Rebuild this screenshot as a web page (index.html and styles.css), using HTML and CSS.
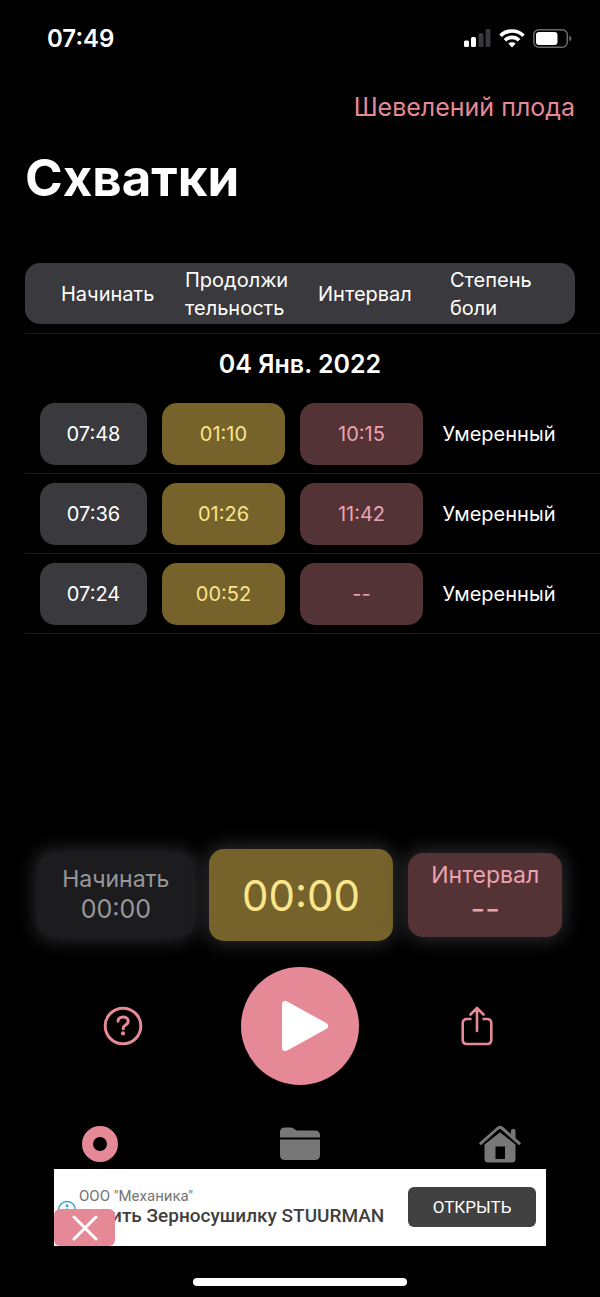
FILE: index.html
```html
<!DOCTYPE html>
<html lang="ru">
<head>
<meta charset="utf-8">
<meta name="viewport" content="width=device-width, initial-scale=1">
<title>Схватки</title>
<link rel="stylesheet" href="styles.css">
</head>
<body>
<div class="status">
  <span class="clock">07:49</span>
  <div class="status-icons">
    <svg width="27" height="18" viewBox="0 0 27 18"><rect x="0" y="11.500" width="5" height="6.500" rx="1.500" fill="#fff"/><rect x="7" y="8" width="5" height="10" rx="1.500" fill="#fff"/><rect x="14.500" y="4" width="5" height="14" rx="1.500" fill="#38383a"/><rect x="21.500" y="0" width="5" height="18" rx="1.500" fill="#38383a"/></svg>
    <svg width="26" height="20" viewBox="0 0 26 20"><g fill="none" stroke="#fff" stroke-width="3.600"><path d="M1.500 7.700a16.400 16.400 0 0 1 23 0"/><path d="M5.900 12.300a10.200 10.200 0 0 1 14.200 0"/></g><path d="M9.300 15.600a5.500 5.500 0 0 1 7.400 0L13 19.400z" fill="#fff"/></svg>
    <svg width="39" height="19" viewBox="0 0 39 19"><rect x="0.800" y="0.800" width="33.500" height="17.400" rx="5" fill="none" stroke="#6b6b6d" stroke-width="1.500"/><rect x="3" y="3" width="21.500" height="13" rx="3" fill="#fff"/><path d="M36.300 6.500v6q2.200-.8 2.200-3t-2.200-3z" fill="#6b6b6d"/></svg>
  </div>
</div>
<header class="header">
  <a class="link" href="#movements">Шевелений плода</a>
  <h1 class="title">Схватки</h1>
</header>
<main class="main">
  <table class="log">
    <thead>
      <tr class="head-row"><th>Начинать</th><th>Продолжи<br>тельность</th><th>Интервал</th><th>Степень<br>боли</th></tr>
    </thead>
    <tbody>
      <tr class="date-row"><th colspan="4">04 Янв. 2022</th></tr>
      <tr class="row"><td class="pill">07:48</td><td class="pill gold">01:10</td><td class="pill rose">10:15</td><td>Умеренный</td></tr>
      <tr class="row"><td class="pill">07:36</td><td class="pill gold">01:26</td><td class="pill rose">11:42</td><td>Умеренный</td></tr>
      <tr class="row"><td class="pill">07:24</td><td class="pill gold">00:52</td><td class="pill rose">--</td><td>Умеренный</td></tr>
    </tbody>
  </table>
</main>
<section class="timers">
  <div class="card start"><span class="label">Начинать</span><span class="value">00:00</span></div>
  <div class="card total">00:00</div>
  <div class="card interval"><span class="label">Интервал</span><span class="value dashes">--</span></div>
</section>
<section class="controls">
  <button class="icon-button" type="button" aria-label="Помощь">
    <svg width="40" height="40" viewBox="0 0 40 40" fill="none" stroke="#e58997" stroke-width="3"><circle cx="20" cy="20" r="17.800"/><path d="M15 15.200c.3-2.700 2.300-4.200 5.100-4.200 3 0 5.100 1.600 5.100 4.100 0 2-1 3-2.600 4-1.700 1.100-2.400 1.700-2.400 3.200v.5" stroke-linecap="round"/><circle cx="20" cy="27.400" r="2.100" fill="#e58997" stroke="none"/></svg>
  </button>
  <button class="play" type="button" aria-label="Старт">
    <svg width="48" height="52" viewBox="0 0 48 52"><path d="M4.500 4.500v43L43.500 26z" fill="#fff" stroke="#fff" stroke-width="7" stroke-linejoin="round"/></svg>
  </button>
  <button class="icon-button" type="button" aria-label="Поделиться">
    <svg width="32" height="40" viewBox="0 0 32 40" fill="none" stroke="#e58997" stroke-width="2.600" stroke-linecap="round" stroke-linejoin="round"><path d="M10.500 13H6q-4.300 0-4.300 4.300v16.500Q1.700 38 6 38h20q4.300 0 4.300-4.200V17.300Q30.300 13 26 13h-4.500" stroke-linecap="butt"/><path d="M16 25V2M9.500 8.500 16 2l6.500 6.500"/></svg>
  </button>
</section>
<nav class="tabs">
  <a href="#record" aria-label="Запись"><svg width="36" height="36" viewBox="0 0 36 36"><circle cx="18" cy="18" r="12.500" fill="none" stroke="#e58997" stroke-width="11"/></svg></a>
  <a href="#files" aria-label="Архив"><svg width="40" height="36" viewBox="0 0 40 36"><path d="M0 11.500V6.500Q0 1.500 5 1.500h5.500q2.200 0 3.600 1.400l.8.700q1 .9 2.600.9H35q5 0 5 5v2zM0 13.500h40V29q0 5-5 5H5q-5 0-5-5z" fill="#777"/></svg></a>
  <a href="#home" aria-label="Главная"><svg width="42" height="38" viewBox="0 0 42 38"><path d="M1.800 18.300 18.500 3.500q2.500-2.200 5 0L40.200 18.300" fill="none" stroke="#777" stroke-width="3" stroke-linecap="round"/><path d="M32 5.500q0-1.500 1.500-1.500h1.500q1.500 0 1.500 1.500v8L32 9.500z" fill="#777"/><path d="M5.500 19.500 21 7.200l15.500 12.300V34q0 3.500-3.500 3.500H9q-3.500 0-3.500-3.500zM16.500 21.500V34h9.500V21.500z" fill="#777" fill-rule="evenodd"/></svg></a>
</nav>
<aside class="ad">
  <div class="ad-text">
    <span class="ad-owner">ООО "Механика"</span>
    <span class="ad-title">Купить Зерносушилку STUURMAN</span>
  </div>
  <button class="ad-open" type="button">ОТКРЫТЬ</button>
  <svg class="ad-info" width="20" height="20" viewBox="0 0 20 20"><circle cx="10" cy="10" r="8.500" fill="#fff" stroke="#3aa5cc" stroke-width="1.500"/><circle cx="10" cy="5.800" r="1.500" fill="#3aa5cc"/><path d="M10 8.500v7" stroke="#3aa5cc" stroke-width="2.400"/></svg>
  <button class="ad-close" type="button" aria-label="Закрыть"><svg width="26" height="26" viewBox="0 0 26 26"><path d="M2 2l22 22M24 2 2 24" stroke="#fff" stroke-width="3" stroke-linecap="round"/></svg></button>
</aside>
<div class="home-bar"></div>
</body>
</html>
```
FILE: styles.css
```css
* { box-sizing: border-box; }
body {
  margin: 0;
  min-height: 100vh;
  display: flex;
  flex-direction: column;
  background: #000;
  color: #fff;
  font-family: Inter, "Liberation Sans", sans-serif;
  font-size: 20px;
}
button { border: 0; padding: 0; margin: 0; background: none; font: inherit; color: inherit; }
svg { display: block; }
.status { display: flex; justify-content: space-between; align-items: center; height: 76px; padding: 0 28px 0 47px; }
.clock { font-size: 24px; font-weight: 600; }
.status-icons { display: flex; align-items: center; gap: 8px; }
.header { display: flex; flex-direction: column; padding: 12px 25px 0; }
.link { align-self: flex-end; color: #e58997; font-size: 25px; line-height: 38px; text-decoration: none; }
.title { margin: 20px 0 0; font-size: 51px; line-height: 64px; font-weight: 700; }
.main { flex: 1; padding: 53px 0 0 25px; }
.log, .log thead, .log tbody { display: block; }
.log th, .log td { padding: 0; font-weight: 400; }
.head-row {
  display: grid;
  grid-template-columns: 124fr 133fr 132fr 125fr;
  align-items: center;
  min-height: 61px;
  margin: 0 25px 9px 0;
  padding-left: 36px;
  border-radius: 15px;
  background: #3a393e;
  text-align: left;
  line-height: 28px;
}
.date-row { display: block; border-top: 1px solid #1b1b1c; padding-right: 25px; }
.log .date-row th { display: block; font-size: 25px; font-weight: 600; line-height: 60px; }
.row {
  display: grid;
  grid-template-columns: 107fr 123fr 123fr 122fr;
  gap: 15px;
  padding: 9px 40px 8px 15px;
  border-bottom: 1px solid #1b1b1c;
  text-align: center;
  line-height: 62px;
}
.pill { border-radius: 15px; background: #3a393e; }
.gold { background: #75632b; color: #fbe58c; }
.rose { background: #533336; color: #eda2b0; }
.timers { display: grid; grid-template-columns: 155fr 184fr 153fr; align-items: center; gap: 15px; padding: 0 38px; }
.card {
  display: flex;
  flex-direction: column;
  align-items: center;
  justify-content: center;
  height: 84px;
  border-radius: 15px;
  box-shadow: 0 0 20px 2px #303033;
}
.label { font-size: 23px; line-height: 28px; }
.value { font-size: 25px; line-height: 32px; }
.start { background: #1c1c1e; color: #98989b; }
.total { height: 92px; background: #75632b; color: #fbe58c; font-size: 42px; }
.interval { background: #533336; color: #eda2b0; }
.dashes { font-size: 32px; line-height: 40px; }
.controls { display: grid; grid-template-columns: repeat(3, 1fr); align-items: center; justify-items: center; padding: 26px 34px 0; }
.play { display: grid; place-items: center; width: 118px; height: 118px; padding-left: 11px; border-radius: 50%; background: #e58997; }
.tabs { display: grid; grid-template-columns: repeat(3, 1fr); align-items: center; justify-items: center; padding-top: 40px; }
.ad {
  position: relative;
  display: flex;
  align-items: center;
  justify-content: space-between;
  height: 77px;
  margin: 6px 54px 0;
  padding: 0 10px 2px 25px;
  background: #fff;
  color: #3f3f3f;
}
.ad-text { display: flex; flex-direction: column; font-family: Roboto, sans-serif; white-space: nowrap; }
.ad-owner { color: #757575; font-size: 15px; line-height: 18px; }
.ad-title { font-size: 19px; line-height: 22px; font-weight: 500; }
.ad-open { width: 128px; height: 40px; border-radius: 6px; background: #414141; color: #fff; font-family: Roboto, sans-serif; font-size: 17px; font-weight: 400; }
.ad-info { position: absolute; left: 3px; top: 31px; }
.ad-close { position: absolute; left: 0; bottom: 0; display: grid; place-items: center; width: 61px; height: 37px; border-radius: 6px; background: #e58997; }
.home-bar { width: 214px; height: 8px; margin: 32px auto 11px; border-radius: 4px; background: #fff; }
```
